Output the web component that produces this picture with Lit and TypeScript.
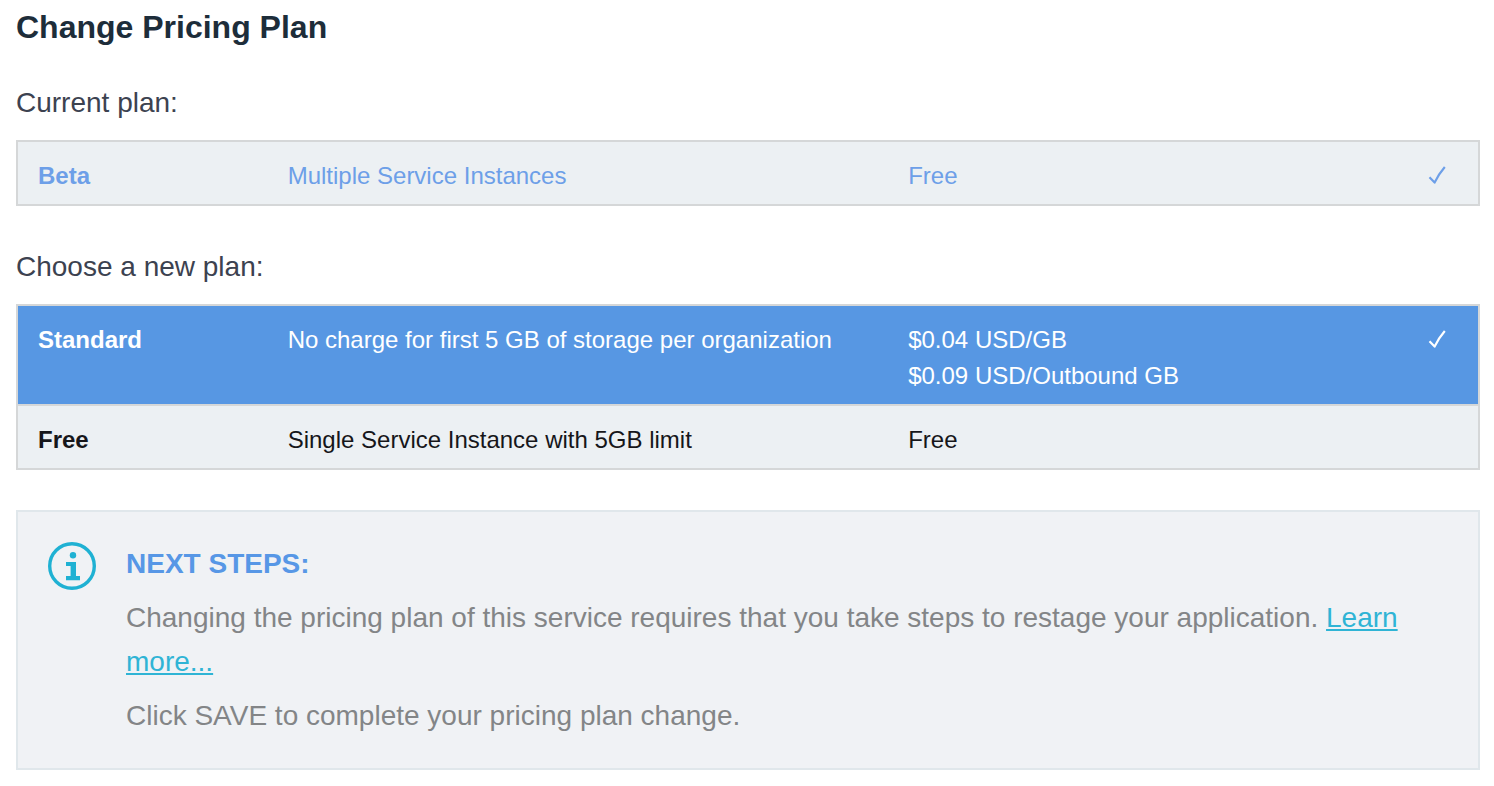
import { LitElement, html, css, svg } from "lit";
import { customElement, property, state } from "lit/decorators.js";
import { classMap } from "lit/directives/class-map.js";

interface Plan {
  name: string;
  features: string;
  prices: string[];
}

const currentPlan: Plan = {
  name: "Beta",
  features: "Multiple Service Instances",
  prices: ["Free"],
};

const newPlans: Plan[] = [
  {
    name: "Standard",
    features: "No charge for first 5 GB of storage per organization",
    prices: ["$0.04 USD/GB", "$0.09 USD/Outbound GB"],
  },
  {
    name: "Free",
    features: "Single Service Instance with 5GB limit",
    prices: ["Free"],
  },
];

const tick = svg`<path d="M1.5 11.3 L6.6 16.6 C9 11.5 12.5 5.8 16.8 0.9" fill="none" stroke="currentColor" stroke-width="2.2" stroke-linejoin="round"></path>`;

@customElement("plan-table")
export class PlanTable extends LitElement {
  @property({ attribute: false }) plans: Plan[] = [];
  @property() selected = "";
  @property() label = "";
  @property({ type: Boolean }) current = false;

  static styles = css`
    :host {
      display: block;
      border: 2px solid #d5d7d8;
      background: #ecf0f3;
      font-size: 24px;
      line-height: 36px;
      color: #16161a;
    }
    table {
      width: 100%;
      table-layout: fixed;
      border-collapse: separate;
      border-spacing: 0;
    }
    .col-name {
      width: 17.1%;
    }
    .col-features {
      width: 42.5%;
    }
    .col-tick {
      width: 90px;
    }
    th,
    td {
      padding: 16px 20px 10px;
      text-align: left;
      vertical-align: top;
      font-weight: normal;
    }
    th {
      font-weight: bold;
    }
    tr + tr > * {
      border-top: 2px solid #d5d7d8;
    }
    .selected {
      background: #5797e3;
      color: #ffffff;
    }
    .current {
      color: #6d9fe8;
    }
    .pick {
      display: block;
      margin: 0;
      padding: 0;
      border: 0;
      background: none;
      color: inherit;
      font: inherit;
      cursor: pointer;
    }
    .price {
      display: block;
    }
    .tick-cell {
      padding-right: 32px;
      text-align: right;
    }
    .tick {
      display: inline-block;
      width: 18px;
      height: 18px;
      vertical-align: baseline;
    }
  `;

  private pick(name: string) {
    this.dispatchEvent(new CustomEvent("plan-pick", { detail: name }));
  }

  render() {
    return html`
      <table aria-label=${this.label}>
        <colgroup>
          <col class="col-name" />
          <col class="col-features" />
          <col />
          <col class="col-tick" />
        </colgroup>
        <tbody>
          ${this.plans.map((plan) => {
            const chosen = plan.name === this.selected;
            return html`
              <tr
                class=${classMap({
                  current: this.current,
                  selected: chosen && !this.current,
                })}
              >
                <th scope="row">
                  ${this.current
                    ? plan.name
                    : html`<button
                        class="pick"
                        type="button"
                        aria-pressed=${chosen ? "true" : "false"}
                        @click=${() => this.pick(plan.name)}
                      >
                        ${plan.name}
                      </button>`}
                </th>
                <td>${plan.features}</td>
                <td>
                  ${plan.prices.map((p) => html`<span class="price">${p}</span>`)}
                </td>
                <td class="tick-cell">
                  ${chosen
                    ? html`<svg class="tick" viewBox="0 0 18 18" aria-hidden="true">
                        ${tick}
                      </svg>`
                    : ""}
                </td>
              </tr>
            `;
          })}
        </tbody>
      </table>
    `;
  }
}

@customElement("app-root")
export class AppRoot extends LitElement {
  @state() private chosen = "Standard";

  static styles = css`
    :host {
      display: block;
      padding: 8px 14px 16px 16px;
      background: #ffffff;
      font-family: "Liberation Sans", Arial, sans-serif;
      font-size: 28px;
    }
    h1,
    h2,
    h3,
    p {
      margin: 0;
    }
    h1 {
      margin-bottom: 36px;
      font-size: 32px;
      line-height: 38px;
      color: #1d2d3a;
    }
    .plans {
      margin-bottom: 40px;
    }
    h2 {
      margin-bottom: 16px;
      font-size: 28px;
      font-weight: normal;
      line-height: 42px;
      color: #3c4250;
    }
    .notice {
      display: flex;
      gap: 30px;
      padding: 30px;
      border: 2px solid #e0e7eb;
      background: #f0f2f5;
      line-height: 44px;
      color: #838587;
    }
    .info {
      flex: none;
      width: 48px;
      height: 48px;
      color: #1fb1d3;
    }
    .body {
      display: flex;
      flex-direction: column;
      gap: 10px;
    }
    h3 {
      font-size: 28px;
      line-height: 44px;
      color: #5797e6;
    }
    a {
      color: #2fb4d5;
      text-decoration-line: underline;
      text-decoration-thickness: 2px;
      text-underline-offset: 2px;
      text-decoration-skip-ink: none;
    }
  `;

  render() {
    return html`
      <main>
        <h1>Change Pricing Plan</h1>
        <section class="plans">
          <h2>Current plan:</h2>
          <plan-table
            label="Current plan"
            current
            .plans=${[currentPlan]}
            .selected=${currentPlan.name}
          ></plan-table>
        </section>
        <section class="plans">
          <h2>Choose a new plan:</h2>
          <plan-table
            label="New plans"
            .plans=${newPlans}
            .selected=${this.chosen}
            @plan-pick=${(e: CustomEvent<string>) => (this.chosen = e.detail)}
          ></plan-table>
        </section>
        <section class="notice">
          <svg class="info" viewBox="0 0 48 48" aria-hidden="true">
            <circle cx="24" cy="24" r="22.3" fill="none" stroke="currentColor" stroke-width="3.4"></circle>
            <circle cx="25" cy="13.2" r="3.2" fill="currentColor"></circle>
            <path d="M18 20H28v14h4v4.2H18V34h4.6V24H18z" fill="currentColor"></path>
          </svg>
          <div class="body">
            <h3>NEXT STEPS:</h3>
            <p>
              Changing the pricing plan of this service requires that you take
              steps to restage your application. <a href="#">Learn more...</a>
            </p>
            <p>Click SAVE to complete your pricing plan change.</p>
          </div>
        </section>
      </main>
    `;
  }
}
